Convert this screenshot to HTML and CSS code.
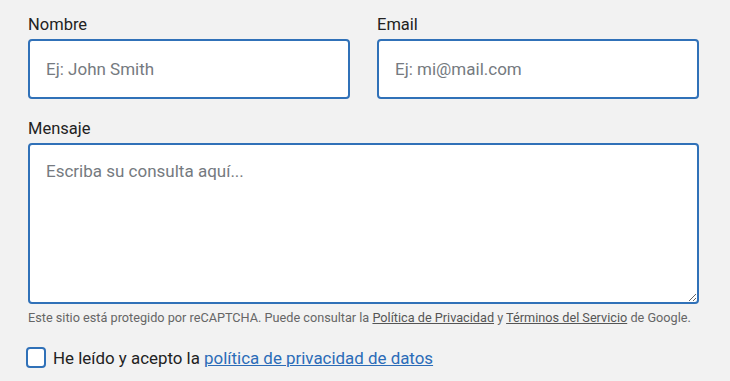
FILE: index.html
```html
<!DOCTYPE html>
<html lang="es">
<head>
<meta charset="utf-8">
<link rel="stylesheet" href="styles.css">
</head>
<body>
<form class="form">
  <div class="row">
    <div class="field">
      <label class="label" for="nombre">Nombre</label>
      <input class="input" id="nombre" type="text" placeholder="Ej: John Smith">
    </div>
    <div class="field">
      <label class="label" for="email">Email</label>
      <input class="input" id="email" type="text" placeholder="Ej: mi@mail.com">
    </div>
  </div>
  <div class="field field-msg">
    <label class="label" for="mensaje">Mensaje</label>
    <textarea class="textarea" id="mensaje" placeholder="Escriba su consulta aquí..."></textarea>
  </div>
  <p class="recaptcha">Este sitio está protegido por reCAPTCHA. Puede consultar la <a href="#">Política de Privacidad</a> y <a href="#">Términos del Servicio</a> de Google.</p>
  <label class="check">
    <span class="box"></span>
    <span class="check-text">He leído y acepto la <a href="#" class="link">política de privacidad de datos</a></span>
  </label>
</form>
</body>
</html>
```

FILE: styles.css
```css
html, body {
  margin: 0;
  padding: 0;
  background: #f2f2f2;
}
body {
  font-family: Roboto, "Liberation Sans", Arial, sans-serif;
  color: #222;
}
.form {
  width: 671px;
  padding: 15px 0 0 28px;
}
.row {
  display: grid;
  grid-template-columns: 322px 322px;
  column-gap: 27px;
}
.field {
  display: flex;
  flex-direction: column;
}
.label {
  font-size: 16.5px;
  line-height: 20px;
  margin-bottom: 4px;
  color: #222;
}
.input, .textarea {
  box-sizing: border-box;
  border: 2px solid #3071b8;
  border-radius: 4px;
  background: #fff;
  font-family: Roboto, "Liberation Sans", Arial, sans-serif;
  font-size: 17px;
  color: #222;
  outline: none;
  margin: 0;
}
.input {
  height: 60px;
  padding: 0 16px;
}
.input::placeholder, .textarea::placeholder {
  color: #757a80;
  opacity: 1;
}
.field-msg {
  margin-top: 20px;
}
.textarea {
  height: 161px;
  padding: 16px 16px;
  resize: vertical;
  line-height: 20px;
}
.recaptcha {
  margin: 6px 0 0;
  font-size: 12.7px;
  line-height: 16px;
  color: #666;
  white-space: nowrap;
}
.recaptcha a {
  color: #555;
  text-decoration: underline;
}
.check {
  display: flex;
  align-items: center;
  gap: 7px;
  margin-top: 21px;
  margin-left: -2px;
}
.box {
  box-sizing: border-box;
  width: 20px;
  height: 21px;
  border: 2px solid #3071b8;
  border-radius: 4px;
  background: #fff;
  flex: none;
}
.check-text {
  font-size: 16.9px;
  line-height: 20px;
  color: #222;
}
.link {
  color: #2b6cb8;
  text-decoration: underline;
}
```
